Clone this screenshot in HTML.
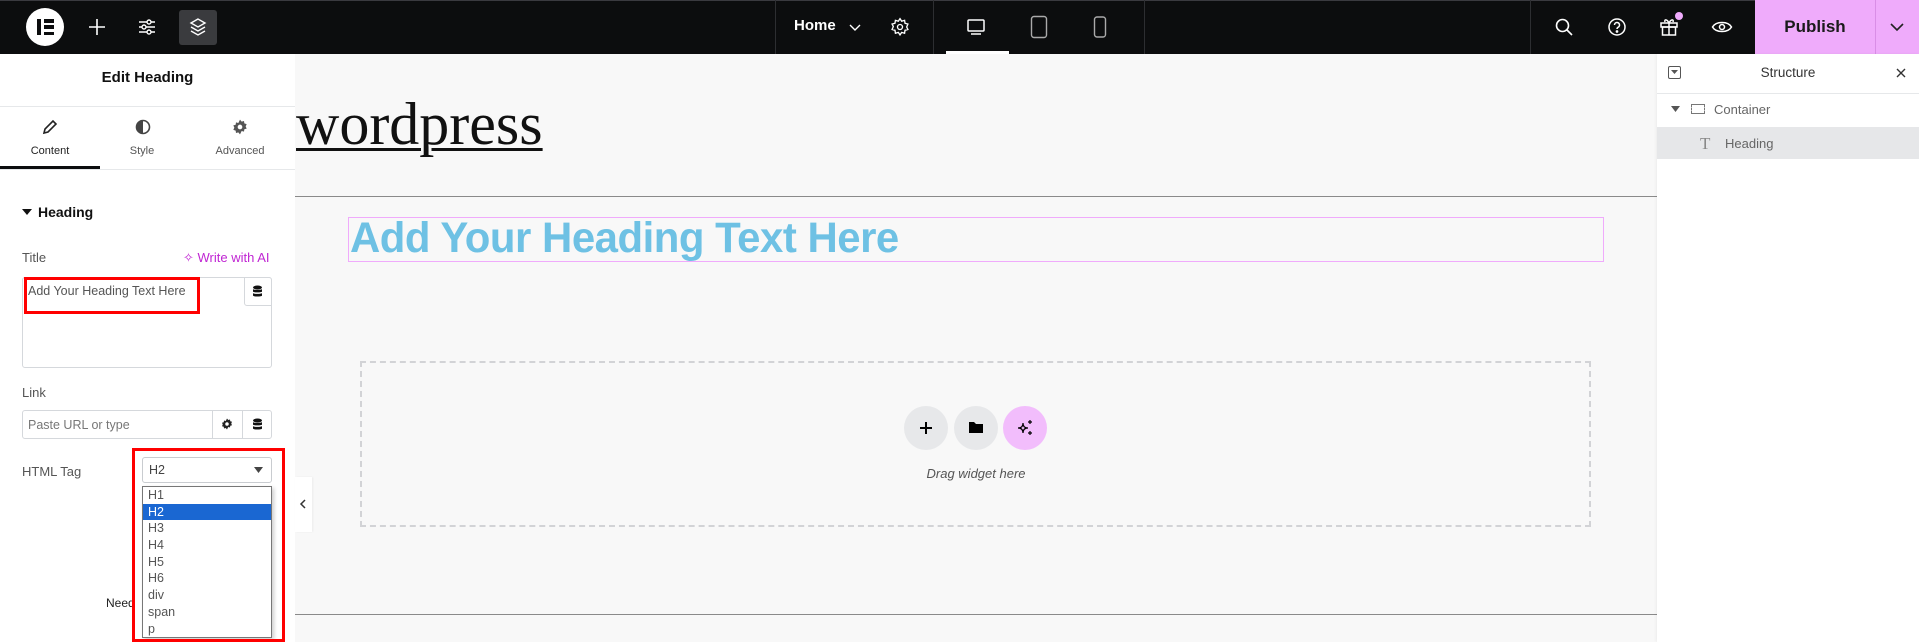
<!DOCTYPE html>
<html><head><style>
*{box-sizing:border-box;margin:0;padding:0}
body{width:1919px;height:642px;overflow:hidden;background:#f8f8f8;font-family:"Liberation Sans",sans-serif;position:relative;color:#333}
.a{position:absolute}
.top{left:0;top:0;width:1919px;height:54px;background:#0c0d0e;border-top:1px solid #3a3a3f}
.sep{top:0;width:1px;height:54px;background:#2d2e31}
svg{display:block}
.panel{left:0;top:54px;width:295px;height:588px;background:#fff}
.lbl{font-size:13px;color:#555}
.dd div{height:16.7px;line-height:16.7px;padding-left:5px;font-size:12.5px;color:#555}
</style></head><body>
<div class="a top"></div>
<div class="a" style="left:26px;top:8px;width:38px;height:38px;border-radius:50%;background:#fff"></div>
<div class="a" style="left:37px;top:19px;width:4px;height:16px;background:#0c0d0e"></div>
<div class="a" style="left:44px;top:19px;width:10px;height:3.5px;background:#0c0d0e"></div>
<div class="a" style="left:44px;top:25.3px;width:10px;height:3.5px;background:#0c0d0e"></div>
<div class="a" style="left:44px;top:31.5px;width:10px;height:3.5px;background:#0c0d0e"></div>
<svg class="a" style="left:87px;top:17px" width="20" height="20" viewBox="0 0 20 20" stroke="#fff" stroke-width="1.6"><path d="M10 2v16M2 10h16"/></svg>
<svg class="a" style="left:137px;top:17px" width="20" height="20" viewBox="0 0 20 20" stroke="#fff" stroke-width="1.4" fill="none"><path d="M2 5h16M2 10h16M2 15h16"/><circle cx="12" cy="5" r="2" fill="#0c0d0e"/><circle cx="7" cy="10" r="2" fill="#0c0d0e"/><circle cx="12" cy="15" r="2" fill="#0c0d0e"/></svg>
<div class="a" style="left:179px;top:10px;width:38px;height:35px;background:#3a3b3e;border-radius:3px"></div>
<svg class="a" style="left:189px;top:17px" width="18" height="20" viewBox="0 0 18 20" stroke="#fff" stroke-width="1.4" fill="none"><path d="M9 2L2 6l7 4 7-4z"/><path d="M2 10l7 4 7-4M2 14l7 4 7-4"/></svg>
<div class="a sep" style="left:775px"></div><div class="a sep" style="left:933px"></div><div class="a sep" style="left:1144px"></div><div class="a sep" style="left:1530px"></div>
<div class="a" style="left:794px;top:17px;color:#fff;font-weight:bold;font-size:15px">Home</div>
<svg class="a" style="left:848px;top:22px" width="14" height="10" viewBox="0 0 14 10" stroke="#fff" stroke-width="1.4" fill="none"><path d="M2 3l5 5 5-5"/></svg>
<svg class="a" style="left:890px;top:17px" width="20" height="20" viewBox="0 0 24 24" stroke="#fff" stroke-width="1.6" fill="none"><circle cx="12" cy="12" r="3"/><path d="M12 2l2 3 3.5-1 .5 3.5 3.5 1-1.5 3.5 1.5 3-3.5 1-.5 3.5-3.5-1-2 3-2-3-3.5 1-.5-3.5-3.5-1 1.5-3.5L2.5 8.5 6 7.5 6.5 4 10 5z"/></svg>
<svg class="a" style="left:966px;top:17px" width="20" height="20" viewBox="0 0 20 20" stroke="#fff" stroke-width="1.5" fill="none"><rect x="2" y="3" width="16" height="11" rx="1"/><path d="M5 17h10"/></svg>
<div class="a" style="left:946px;top:51px;width:63px;height:3px;background:#fff"></div>
<svg class="a" style="left:1030px;top:15px" width="18" height="24" viewBox="0 0 18 24" stroke="#aaa" stroke-width="1.4" fill="none"><rect x="1.5" y="1.5" width="15" height="21" rx="2.5"/></svg>
<svg class="a" style="left:1093px;top:15px" width="14" height="24" viewBox="0 0 14 24" stroke="#aaa" stroke-width="1.4" fill="none"><rect x="1.5" y="2" width="11" height="20" rx="2.5"/></svg>
<svg class="a" style="left:1554px;top:17px" width="20" height="20" viewBox="0 0 20 20" stroke="#fff" stroke-width="1.6" fill="none"><circle cx="8.5" cy="8.5" r="6"/><path d="M13 13l5 5"/></svg>
<svg class="a" style="left:1607px;top:17px" width="20" height="20" viewBox="0 0 20 20" stroke="#fff" stroke-width="1.5" fill="none"><circle cx="10" cy="10" r="8"/><path d="M7.5 8a2.5 2.5 0 1 1 3.5 2.3c-.7.4-1 .9-1 1.7"/><circle cx="10" cy="14.5" r=".6" fill="#fff"/></svg>
<svg class="a" style="left:1659px;top:16px" width="20" height="22" viewBox="0 0 20 22" stroke="#fff" stroke-width="1.5" fill="none"><rect x="2" y="7" width="16" height="4"/><rect x="3.5" y="11" width="13" height="8"/><path d="M10 7v12M10 7C8 3 5 3 6 6M10 7c2-4 5-4 4-1"/></svg>
<div class="a" style="left:1675px;top:12px;width:8px;height:8px;border-radius:50%;background:#f0abfc"></div>
<svg class="a" style="left:1711px;top:18px" width="22" height="18" viewBox="0 0 22 18" stroke="#fff" stroke-width="1.5" fill="none"><path d="M1.5 9C5 3 17 3 20.5 9 17 15 5 15 1.5 9z"/><circle cx="11" cy="9" r="2.5"/></svg>
<div class="a" style="left:1755px;top:0;width:164px;height:54px;background:#efabfb"></div>
<div class="a" style="left:1875px;top:0;width:1px;height:54px;background:#d98ee6"></div>
<div class="a" style="left:1755px;top:17px;width:120px;text-align:center;font-size:17px;font-weight:bold;color:#1a1a1a">Publish</div>
<svg class="a" style="left:1889px;top:22px" width="16" height="10" viewBox="0 0 16 10" stroke="#222" stroke-width="1.6" fill="none"><path d="M2 2l6 6 6-6"/></svg>

<div class="a" style="left:296px;top:90px;font-family:'Liberation Serif',serif;font-size:60px;color:#111;text-decoration:underline;text-decoration-thickness:3px;text-underline-offset:4px">wordpress</div>
<div class="a" style="left:295px;top:196px;width:1362px;height:1px;background:#8a8a8a"></div>
<div class="a" style="left:348px;top:217px;width:1256px;height:45px;border:1.5px solid #f0abfc"></div>
<div class="a" style="left:350px;top:214px;font-size:43px;font-weight:bold;color:#6ec1e4;letter-spacing:-0.5px;transform:scaleX(0.975);transform-origin:left">Add Your Heading Text Here</div>
<div class="a" style="left:360px;top:361px;width:1231px;height:166px;border:2px dashed #d2d3d6"></div>
<div class="a" style="left:904px;top:406px;width:44px;height:44px;border-radius:50%;background:#e7e8ea"></div>
<div class="a" style="left:954px;top:406px;width:44px;height:44px;border-radius:50%;background:#e7e8ea"></div>
<div class="a" style="left:1003px;top:406px;width:44px;height:44px;border-radius:50%;background:#f2bdfc"></div>
<svg class="a" style="left:919px;top:421px" width="14" height="14" viewBox="0 0 14 14" stroke="#000" stroke-width="2"><path d="M7 1v12M1 7h12"/></svg>
<svg class="a" style="left:968px;top:420px" width="16" height="14" viewBox="0 0 16 14"><path d="M1 2h5l2 2h7v9H1z" fill="#000"/></svg>
<svg class="a" style="left:1016px;top:419px" width="18" height="18" viewBox="0 0 18 18" stroke="#000" stroke-width="1.2" fill="none"><path d="M7 4q0 5 5 5q-5 0-5 5q0-5-5-5q5 0 5-5z"/><path d="M14 1v4M12 3h4M14 12v4M12 14h4"/></svg>
<div class="a" style="left:925px;top:466px;width:102px;text-align:center;font-size:13px;font-style:italic;color:#555">Drag widget here</div>
<div class="a" style="left:295px;top:614px;width:1362px;height:1px;background:#8a8a8a"></div>

<div class="a panel"></div>
<div class="a" style="left:0;top:69px;width:295px;text-align:center;font-weight:bold;font-size:15px;color:#111">Edit Heading</div>
<div class="a" style="left:0;top:106px;width:295px;height:1px;background:#e6e8ea"></div>
<svg class="a" style="left:42px;top:119px" width="16" height="16" viewBox="0 0 16 16"><path d="M2 14l1-4 8-8 3 3-8 8z" fill="none" stroke="#222" stroke-width="1.6"/></svg>
<svg class="a" style="left:135px;top:119px" width="16" height="16" viewBox="0 0 16 16"><circle cx="8" cy="8" r="6.5" fill="none" stroke="#444" stroke-width="1.6"/><path d="M8 1.5a6.5 6.5 0 0 0 0 13z" fill="#444"/></svg>
<svg class="a" style="left:232px;top:119px" width="16" height="16" viewBox="0 0 24 24"><path fill="#555" d="M12 1l2.5 3 3.5-1 .5 3.6 3.5 1-1.5 3.4 1.5 3.4-3.5 1-.5 3.6-3.5-1L12 23l-2.5-3-3.5 1-.5-3.6-3.5-1L3.5 13 2 9.6l3.5-1L6 5l3.5 1z"/><circle cx="12" cy="12" r="3.5" fill="#fff"/></svg>
<div class="a" style="left:0;top:145px;width:100px;text-align:center;font-size:11px;color:#222">Content</div>
<div class="a" style="left:92px;top:145px;width:100px;text-align:center;font-size:11px;color:#555">Style</div>
<div class="a" style="left:190px;top:145px;width:100px;text-align:center;font-size:11px;color:#555">Advanced</div>
<div class="a" style="left:0;top:166px;width:100px;height:3px;background:#0c0d0e"></div>
<div class="a" style="left:0;top:169px;width:295px;height:1px;background:#e6e8ea"></div>
<svg class="a" style="left:22px;top:208px" width="10" height="8" viewBox="0 0 10 8"><path d="M0 1h10L5 7z" fill="#111"/></svg>
<div class="a" style="left:38px;top:204px;font-weight:bold;font-size:14px;color:#111">Heading</div>
<div class="a lbl" style="left:22px;top:250px">Title</div>
<div class="a" style="left:183px;top:250px;font-size:13px;color:#c026d3">✧ Write with AI</div>
<div class="a" style="left:22px;top:277px;width:250px;height:91px;border:1px solid #d5d8dc;border-radius:3px"></div>
<div class="a" style="left:244px;top:277px;width:28px;height:29px;border:1px solid #d5d8dc;border-radius:0 3px 0 3px;background:#fff"></div>
<svg class="a" style="left:252px;top:285px" width="11" height="13" viewBox="0 0 11 13"><ellipse cx="5.5" cy="2.5" rx="4.5" ry="2" fill="#111"/><path d="M1 4v2.5c0 1.2 9 1.2 9 0V4c0 1.2-9 1.2-9 0zM1 8v2.5c0 1.4 9 1.4 9 0V8c0 1.2-9 1.2-9 0z" fill="#111"/></svg>
<div class="a" style="left:28px;top:284px;font-size:12.5px;color:#555">Add Your Heading Text Here</div>
<div class="a" style="left:24px;top:277px;width:176px;height:37px;border:3px solid #f00"></div>
<div class="a lbl" style="left:22px;top:385px">Link</div>
<div class="a" style="left:22px;top:410px;width:250px;height:29px;border:1px solid #d5d8dc;border-radius:3px"></div>
<div class="a" style="left:212px;top:410px;width:1px;height:29px;background:#d5d8dc"></div>
<div class="a" style="left:242px;top:410px;width:1px;height:29px;background:#d5d8dc"></div>
<div class="a" style="left:28px;top:418px;font-size:12.5px;color:#777">Paste URL or type</div>
<svg class="a" style="left:221px;top:418px" width="12" height="12" viewBox="0 0 24 24"><path fill="#222" d="M12 1l2.5 3 3.5-1 .5 3.6 3.5 1-1.5 3.4 1.5 3.4-3.5 1-.5 3.6-3.5-1L12 23l-2.5-3-3.5 1-.5-3.6-3.5-1L3.5 13 2 9.6l3.5-1L6 5l3.5 1z"/><circle cx="12" cy="12" r="3.5" fill="#fff"/></svg>
<svg class="a" style="left:252px;top:418px" width="11" height="13" viewBox="0 0 11 13"><ellipse cx="5.5" cy="2.5" rx="4.5" ry="2" fill="#111"/><path d="M1 4v2.5c0 1.2 9 1.2 9 0V4c0 1.2-9 1.2-9 0zM1 8v2.5c0 1.4 9 1.4 9 0V8c0 1.2-9 1.2-9 0z" fill="#111"/></svg>
<div class="a lbl" style="left:22px;top:464px">HTML Tag</div>
<div class="a" style="left:142px;top:457px;width:130px;height:26px;border:1px solid #c9ccd0;border-radius:3px;background:#fff"></div>
<div class="a" style="left:149px;top:463px;font-size:12.5px;color:#444">H2</div>
<svg class="a" style="left:254px;top:467px" width="9" height="6" viewBox="0 0 9 6"><path d="M0 0h9L4.5 6z" fill="#444"/></svg>
<div class="a" style="left:106px;top:596px;font-size:12px;color:#222">Need</div>
<div class="a dd" style="left:142px;top:486px;width:130px;height:152px;border:1px solid #777;background:#fff;box-shadow:2px 2px 4px rgba(0,0,0,.2)">
<div>H1</div><div style="background:#1a67d2;color:#fff">H2</div><div>H3</div><div>H4</div><div>H5</div><div>H6</div><div>div</div><div>span</div><div>p</div></div>
<div class="a" style="left:132px;top:448px;width:153px;height:194px;border:3px solid #f00"></div>
<div class="a" style="left:295px;top:477px;width:17px;height:55px;background:#fff;box-shadow:1px 0 2px rgba(0,0,0,.05)"></div>
<svg class="a" style="left:299px;top:499px" width="8" height="10" viewBox="0 0 8 10" stroke="#333" stroke-width="1.5" fill="none"><path d="M6 1L2 5l4 4"/></svg>

<div class="a" style="left:1657px;top:54px;width:262px;height:588px;background:#fff;box-shadow:-1px 0 3px rgba(0,0,0,.05)"></div>
<div class="a" style="left:1668px;top:66px;width:13px;height:13px;border:1.5px solid #555;border-radius:2px"></div>
<svg class="a" style="left:1671px;top:70px" width="7" height="5" viewBox="0 0 7 5"><path d="M0 0h7L3.5 4z" fill="#555"/></svg>
<div class="a" style="left:1657px;top:65px;width:262px;text-align:center;font-size:13.5px;color:#333">Structure</div>
<svg class="a" style="left:1896px;top:68px" width="10" height="10" viewBox="0 0 10 10" stroke="#333" stroke-width="1.4"><path d="M1 1l8 8M9 1L1 9"/></svg>
<div class="a" style="left:1657px;top:93px;width:262px;height:1px;background:#e6e8ea"></div>
<svg class="a" style="left:1671px;top:106px" width="9" height="6" viewBox="0 0 9 6"><path d="M0 0h9L4.5 6z" fill="#555"/></svg>
<div class="a" style="left:1691px;top:104px;width:14px;height:10px;border:1.5px solid #777;border-left-style:dashed;border-right-style:dashed"></div>
<div class="a" style="left:1714px;top:102px;font-size:13px;color:#666">Container</div>
<div class="a" style="left:1657px;top:127px;width:262px;height:32px;background:#e6e7e9"></div>
<div class="a" style="left:1700px;top:134px;font-family:'Liberation Serif',serif;font-size:17px;color:#888">T</div>
<div class="a" style="left:1725px;top:136px;font-size:13px;color:#666">Heading</div>
</body></html>
